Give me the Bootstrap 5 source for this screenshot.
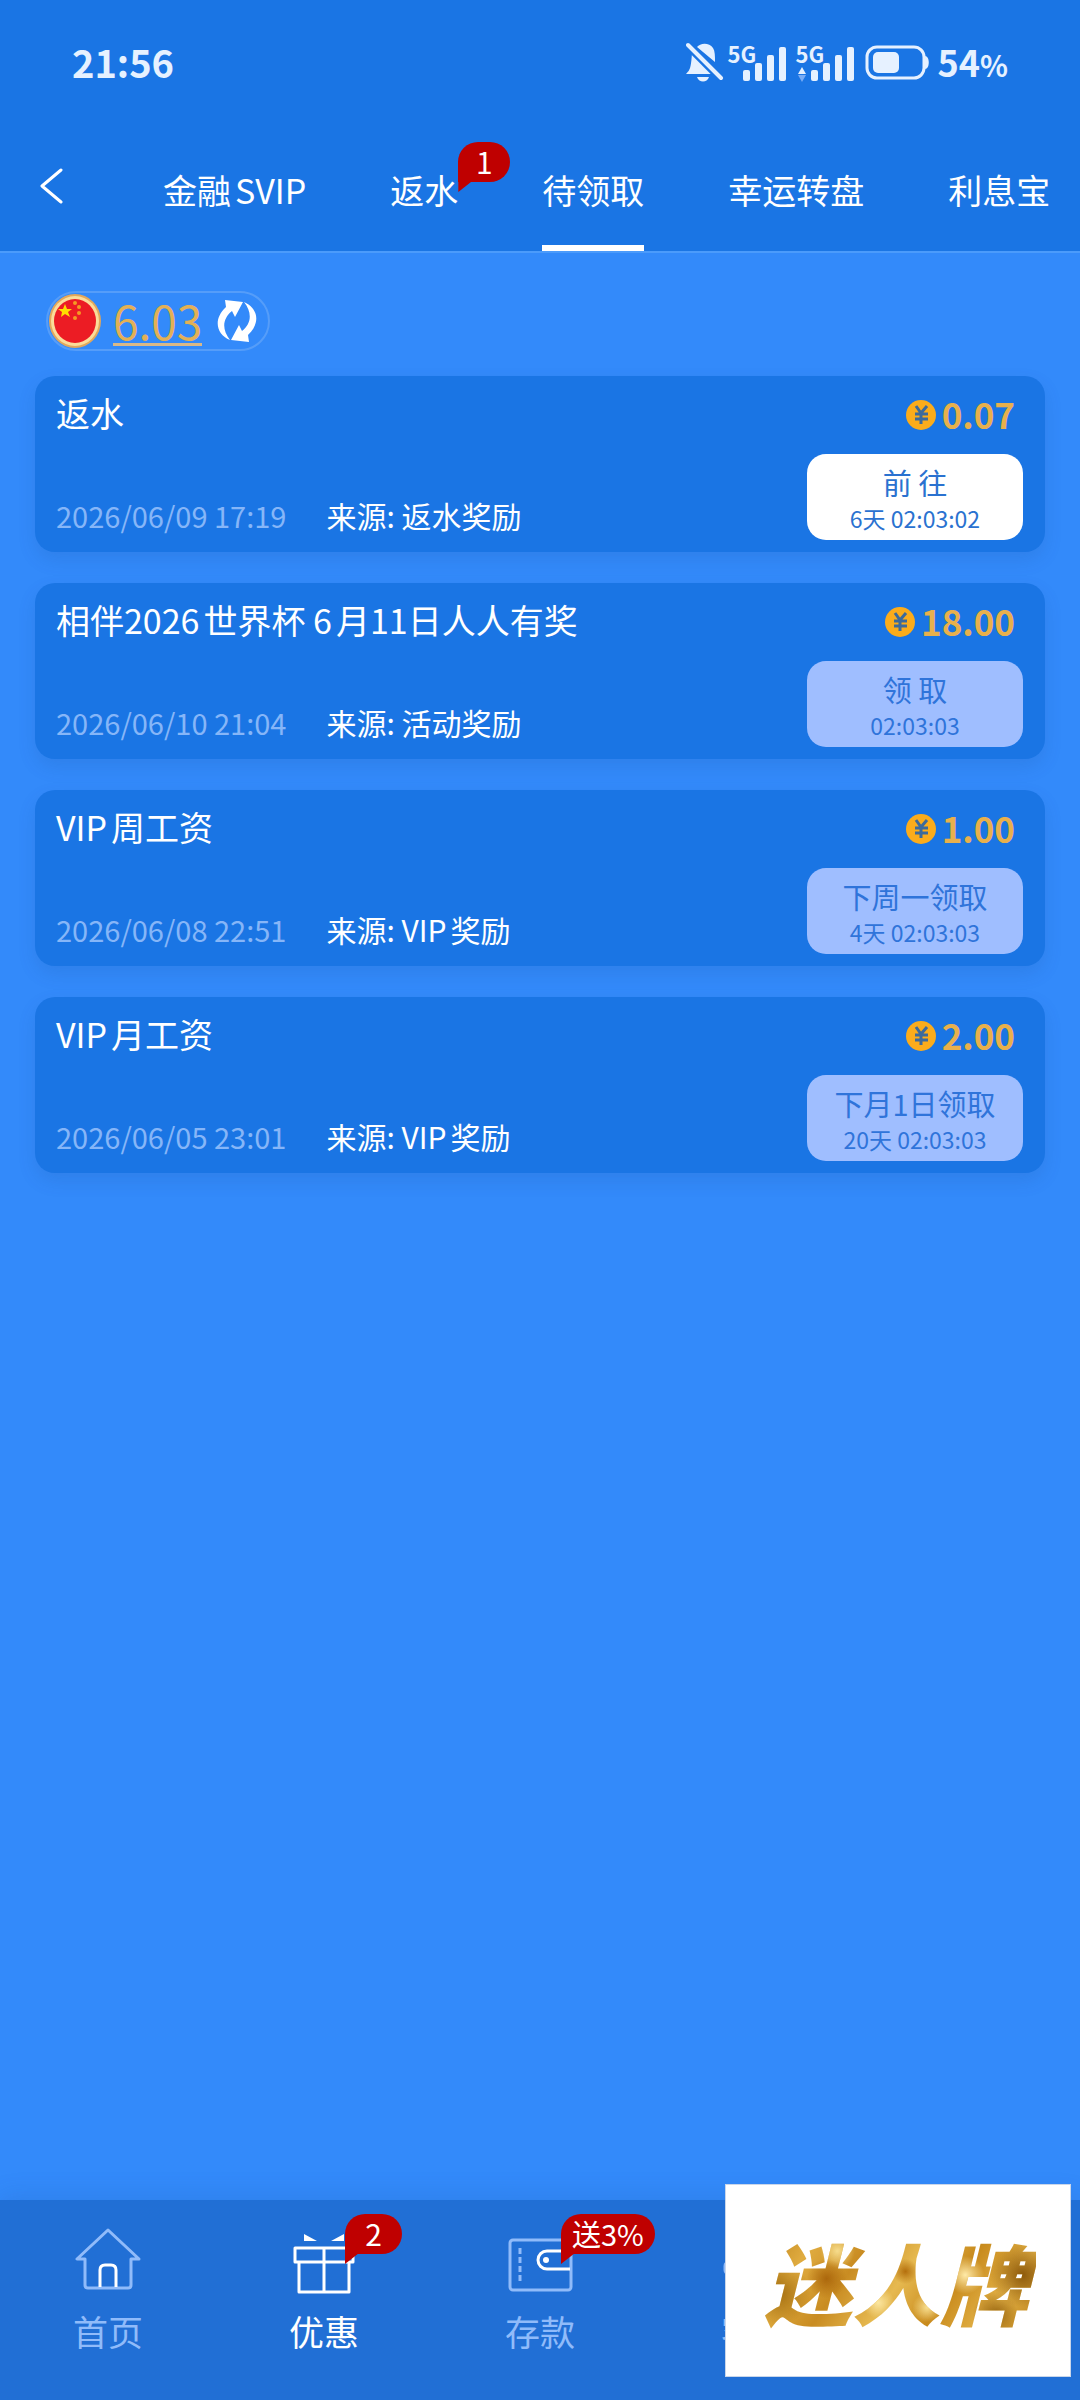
<!DOCTYPE html>
<html lang="zh-CN">
<head>
<meta charset="utf-8">
<meta name="viewport" content="width=device-width, initial-scale=1">
<title>待领取</title>
<link href="https://cdn.jsdelivr.net/npm/bootstrap@5.3.0/dist/css/bootstrap.min.css" rel="stylesheet">
<style>
  body { background: #338afa; color: #fff; font-family: "Noto Sans CJK SC", "Noto Sans", sans-serif; font-size: 30px; line-height: 40px; }
  svg { display: block; flex: none; }
  a { color: inherit; text-decoration: none; }

  /* header */
  .top-area { background: #1a75e4; border-bottom: 2px solid #4b9bfb; }
  .status-bar { height: 124px; padding: 0 72px; color: #e6f1ff; }
  .clock { font-size: 38px; font-weight: 700; }
  .net-label { font-size: 22px; font-weight: 700; line-height: 22px; left: 0; top: 0; }
  .net { width: 60px; height: 40px; }
  .power { font-size: 36px; font-weight: 700; }
  .power small { font-size: 29px; }
  .tab-row { height: 127px; padding-left: 40px; overflow: hidden; }
  .back-btn { width: 24px; height: 124px; color: #c9dfff; }
  .tab-list { gap: 84px; margin-left: 99px; font-size: 34px; }
  .tab-list a { height: 127px; padding-top: 4px; border-bottom: 6px solid transparent; border-top: 6px solid transparent; }
  .tab-list a.active { border-bottom-color: #fff; }
  .latin { margin-left: 4px; }

  /* red speech-bubble badges */
  .bubble { position: absolute; height: 40px; min-width: 52px; padding: 0 14px; background: #bf0000; color: #fff; border-radius: 20px 20px 20px 0; font-size: 30px; line-height: 38px; text-align: center; white-space: nowrap; }
  .bubble::after { content: ""; position: absolute; left: 0; top: 39px; width: 14px; height: 11px; background: inherit; clip-path: polygon(0 0, 100% 0, 0 100%); }
  .bubble-tab { left: 68px; top: 12px; }
  .bubble-nav { left: 129px; top: 14px; }
  .bubble-nav.single { min-width: 57px; }
  .bubble-nav.text-tag { font-size: 29px; padding: 0 11px; }

  /* balance */
  main { padding: 38px 35px 0; }
  .balance { height: 60px; margin-left: 11px; padding: 0 10px 0 1px; border: 2px solid #559df9; border-radius: 30px; }
  .balance-value { color: #e3b056; font-size: 46px; line-height: 46px; margin: 0 14px 0 12px; border-bottom: 3px solid #d9b887; }
  .plain-btn { background: none; border: 0; padding: 0; color: #fff; }

  /* reward cards */
  .reward-list { margin-top: 25px; gap: 31px; }
  .reward { height: 176px; padding: 17px 22px 12px 21px; border-radius: 20px; background: #1a75e4; box-shadow: 0 8px 18px rgba(20, 70, 140, .14); }
  .reward-title { font-size: 34px; line-height: 40px; margin: 0; font-weight: 400; }
  .reward-meta { gap: 40px; line-height: 40px; margin-bottom: 5px; }
  .reward-date { color: #86b6f8; font-size: 29px; }
  .amount { color: #e8b04c; font-size: 35px; font-weight: 700; line-height: 42px; gap: 5px; margin-right: 8px; }
  .claim-btn { width: 216px; height: 86px; border: 0; padding: 7px 0; border-radius: 19px; background: #fff; color: #2a72d0; }
  .claim-btn:disabled { background: #9fbeff; color: #2f74da; }
  .claim-label { font-size: 29px; line-height: 42px; }
  .claim-time { font-size: 23px; line-height: 30px; }

  /* bottom navigation */
  .bottom-nav { height: 200px; background: #216fd5; box-shadow: 0 -4px 24px rgba(20, 70, 140, .14); }
  .nav-cell { width: 20%; padding-top: 25px; color: #90bbfa; font-size: 35px; }
  .nav-cell.active { color: #fff; }
  .nav-cell svg { margin: 0 auto 16px; }

  /* floating promo */
  .promo { right: 9px; bottom: 23px; width: 346px; height: 193px; background: #fff; border: 1px solid #c9d6ea; z-index: 5; }
  .promo-text { font-size: 88px; font-weight: 900; font-style: italic; line-height: 120px; padding-right: 8px; margin-left: 4px; color: transparent; -webkit-background-clip: text; background-clip: text;
    background-image:
      radial-gradient(circle at 23% 48%, #a9640aee 0, transparent 9%),
      radial-gradient(circle at 52% 42%, #b06a08ee 0, transparent 8%),
      radial-gradient(circle at 5% 60%, #9a6509dd 0, transparent 12%),
      radial-gradient(circle at 95% 45%, #875306ee 0, transparent 12%),
      radial-gradient(circle at 74% 45%, #ffeaa8 0, transparent 9%),
      radial-gradient(circle at 42% 68%, #fbe6a0 0, transparent 9%),
      radial-gradient(circle at 60% 72%, #f8df90 0, transparent 8%),
      radial-gradient(circle at 27% 25%, #f6dc8c 0, transparent 8%),
      radial-gradient(circle at 85% 78%, #8d5a08dd 0, transparent 9%),
      linear-gradient(125deg, #b87a14 0, #e0ac40 18%, #c98c22 34%, #e6b950 50%, #c88a1c 66%, #e3b248 82%, #b4770f 100%); }
</style>
</head>
<body>
<div class="d-flex flex-column min-vh-100">
  <header class="top-area">
    <div class="status-bar d-flex align-items-center justify-content-between">
      <span class="clock">21:56</span>
      <div class="d-flex align-items-center">
        <svg width="38" height="40" viewBox="0 0 38 40" fill="#e6f1ff"><path d="M11 5C14 1 23 0 27 6c2 3 2 8 2 14L11 5ZM6 11l20 21H0c4-4 5-6 6-21Z"/><path d="M2 3l33 33" stroke="#1a75e4" stroke-width="9"/><path d="M2 3l33 33" stroke="#e6f1ff" stroke-width="4" stroke-linecap="round"/><path d="M11 35h12c-2 6-10 6-12 0Z"/></svg>
        <div class="net position-relative ms-1">
          <span class="net-label position-absolute">5G</span>
          <svg width="60" height="40" viewBox="0 0 60 40" fill="#e6f1ff"><rect x="15" y="28" width="7" height="11" rx="2"/><rect x="27" y="21" width="7" height="18" rx="2"/><rect x="39" y="13" width="7" height="26" rx="2"/><rect x="51" y="5" width="7" height="34" rx="2"/></svg>
        </div>
        <div class="net position-relative ms-2">
          <span class="net-label position-absolute">5G</span>
          <svg width="60" height="40" viewBox="0 0 60 40" fill="#e6f1ff"><path d="M6 25l4 7H2Z"/><path d="M6 40l4-7H2Z" fill="#79acf5"/><rect x="15" y="28" width="7" height="11" rx="2"/><rect x="27" y="21" width="7" height="18" rx="2"/><rect x="39" y="13" width="7" height="26" rx="2"/><rect x="51" y="5" width="7" height="34" rx="2"/></svg>
        </div>
        <svg class="ms-2" width="66" height="36" viewBox="0 0 66 36"><rect x="3" y="3" width="57" height="31" rx="10" fill="none" stroke="#e6f1ff" stroke-width="3"/><rect x="9" y="8" width="26" height="21" rx="5" fill="#e6f1ff"/><path d="M61 12c5 0 5 13 0 13Z" fill="#e6f1ff"/></svg>
        <span class="power ms-2">54<small>%</small></span>
      </div>
    </div>
    <nav class="tab-row d-flex">
      <button class="plain-btn back-btn" type="button" aria-label="返回"><svg width="24" height="36" viewBox="0 0 24 36" fill="none" stroke="currentColor" stroke-width="3" stroke-linecap="round" stroke-linejoin="round"><path d="M21 2L2 18l19 16"/></svg></button>
      <div class="tab-list d-flex text-nowrap">
        <a class="d-flex align-items-center" href="#">金融<span class="latin">SVIP</span></a>
        <a class="d-flex align-items-center position-relative" href="#">返水<span class="bubble bubble-tab">1</span></a>
        <a class="d-flex align-items-center active" href="#" aria-current="page">待领取</a>
        <a class="d-flex align-items-center" href="#">幸运转盘</a>
        <a class="d-flex align-items-center" href="#">利息宝</a>
      </div>
    </nav>
  </header>

  <main class="flex-grow-1">
    <div class="balance d-inline-flex align-items-center align-top">
      <svg width="52" height="54" viewBox="0 0 52 54"><ellipse cx="26" cy="27" rx="26" ry="27" fill="#e3a75a"/><ellipse cx="26" cy="27" rx="24" ry="25" fill="#fbdc9a"/><ellipse cx="26" cy="27" rx="21" ry="22" fill="#ec1c24"/><path d="M16 10l2 5h5l-4 3 2 5-5-3-4 3 1-5-4-3h5Z" fill="#ffde00"/><g fill="#f59a23"><circle cx="26" cy="9" r="2"/><circle cx="30" cy="13" r="2"/><circle cx="30" cy="19" r="2"/><circle cx="26" cy="24" r="2"/></g></svg>
      <a class="balance-value" href="#">6.03</a>
      <button class="plain-btn" type="button" aria-label="刷新"><svg width="42" height="44" viewBox="0 0 42 44" fill="#fff"><path d="M9 1l18 2-8 15-3-6C6 20 6 31 14 41 0 35-3 20 10 8Z"/><path d="M33 43l-18-2 8-15 3 6c10-8 10-19 2-29 14 6 17 21 4 33Z"/></svg></button>
    </div>

    <section class="reward-list d-flex flex-column">
      <article class="reward d-flex justify-content-between">
        <div class="d-flex flex-column justify-content-between">
          <h2 class="reward-title">返水</h2>
          <div class="reward-meta d-flex"><time class="reward-date">2026/06/09 17:19</time><span>来源: 返水奖励</span></div>
        </div>
        <div class="d-flex flex-column justify-content-between align-items-end">
          <div class="amount d-flex align-items-center"><svg width="31" height="32" viewBox="0 0 31 32"><use href="#coin"/></svg>0.07</div>
          <button class="claim-btn d-flex flex-column align-items-center" type="button"><span class="claim-label">前 往</span><span class="claim-time">6天 02:03:02</span></button>
        </div>
      </article>
      <article class="reward d-flex justify-content-between">
        <div class="d-flex flex-column justify-content-between">
          <h2 class="reward-title">相伴2026<span class="latin">世界杯 6</span><span class="latin">月11日人人有奖</span></h2>
          <div class="reward-meta d-flex"><time class="reward-date">2026/06/10 21:04</time><span>来源: 活动奖励</span></div>
        </div>
        <div class="d-flex flex-column justify-content-between align-items-end">
          <div class="amount d-flex align-items-center"><svg width="31" height="32" viewBox="0 0 31 32"><use href="#coin"/></svg>18.00</div>
          <button class="claim-btn d-flex flex-column align-items-center" type="button" disabled><span class="claim-label">领 取</span><span class="claim-time">02:03:03</span></button>
        </div>
      </article>
      <article class="reward d-flex justify-content-between">
        <div class="d-flex flex-column justify-content-between">
          <h2 class="reward-title">VIP<span class="latin">周工资</span></h2>
          <div class="reward-meta d-flex"><time class="reward-date">2026/06/08 22:51</time><span>来源: VIP<span class="latin">奖励</span></span></div>
        </div>
        <div class="d-flex flex-column justify-content-between align-items-end">
          <div class="amount d-flex align-items-center"><svg width="31" height="32" viewBox="0 0 31 32"><use href="#coin"/></svg>1.00</div>
          <button class="claim-btn d-flex flex-column align-items-center" type="button" disabled><span class="claim-label">下周一领取</span><span class="claim-time">4天 02:03:03</span></button>
        </div>
      </article>
      <article class="reward d-flex justify-content-between">
        <div class="d-flex flex-column justify-content-between">
          <h2 class="reward-title">VIP<span class="latin">月工资</span></h2>
          <div class="reward-meta d-flex"><time class="reward-date">2026/06/05 23:01</time><span>来源: VIP<span class="latin">奖励</span></span></div>
        </div>
        <div class="d-flex flex-column justify-content-between align-items-end">
          <div class="amount d-flex align-items-center"><svg width="31" height="32" viewBox="0 0 31 32"><use href="#coin"/></svg>2.00</div>
          <button class="claim-btn d-flex flex-column align-items-center" type="button" disabled><span class="claim-label">下月1日领取</span><span class="claim-time">20天 02:03:03</span></button>
        </div>
      </article>
    </section>
  </main>

  <nav class="bottom-nav d-flex text-center">
    <a class="nav-cell" href="#">
      <svg width="68" height="70" viewBox="0 0 68 70" fill="none" stroke="currentColor" stroke-width="3" stroke-linejoin="round"><path d="M34 5L3 34h8v26c0 2 1 3 3 3h40c2 0 3-1 3-3V34h8Z"/><path d="M26 62V45q0-5 5-5h6q5 0 5 5v17" stroke="#fff"/></svg>
      首页</a>
    <a class="nav-cell active position-relative" href="#" aria-current="page">
      <svg width="68" height="70" viewBox="0 0 68 70" fill="none" stroke="#fff" stroke-width="3" stroke-linejoin="round"><path d="M5 23h58v14H5ZM9 37h50v30H9ZM34 23v44"/><path d="M14 9l13 7H14ZM54 9l-13 7h13Z" fill="#fff" stroke="none"/></svg>
      <span class="bubble bubble-nav single">2</span>优惠</a>
    <a class="nav-cell position-relative" href="#">
      <svg width="68" height="70" viewBox="0 0 68 70" fill="none" stroke="currentColor" stroke-width="3"><rect x="4" y="15" width="61" height="50" rx="3"/><path d="M14 23v34" stroke-dasharray="6 3"/><path d="M64 26H41a9 9 0 0 0 0 18h23" stroke="#fff"/><circle cx="40" cy="35" r="3" fill="#fff" stroke="none"/></svg>
      <span class="bubble bubble-nav text-tag">送3%</span>存款</a>
    <a class="nav-cell" href="#">
      <svg width="68" height="70" viewBox="0 0 68 70" fill="none" stroke="currentColor" stroke-width="3"><path d="M10 35C10-2 58-2 58 35"/><rect x="3" y="37" width="10" height="12" rx="4"/><rect x="55" y="37" width="10" height="12" rx="4"/><path d="M60 51q-3 10-18 10"/></svg>
      客服</a>
  </nav>
</div>

<a class="promo position-fixed d-flex align-items-center justify-content-center" href="#"><span class="promo-text">迷人牌</span></a>

<svg width="0" height="0" class="position-absolute" aria-hidden="true"><defs>
  <g id="coin"><ellipse cx="15" cy="17" rx="15" ry="15" fill="#fbac1b"/><path d="M10 8l5 7 6-7M9 16h13M9 21h13M15 15v11" fill="none" stroke="#3c6a9c" stroke-width="3"/></g>
</defs></svg>
<script src="https://cdn.jsdelivr.net/npm/bootstrap@5.3.0/dist/js/bootstrap.bundle.min.js"></script>
</body>
</html>
